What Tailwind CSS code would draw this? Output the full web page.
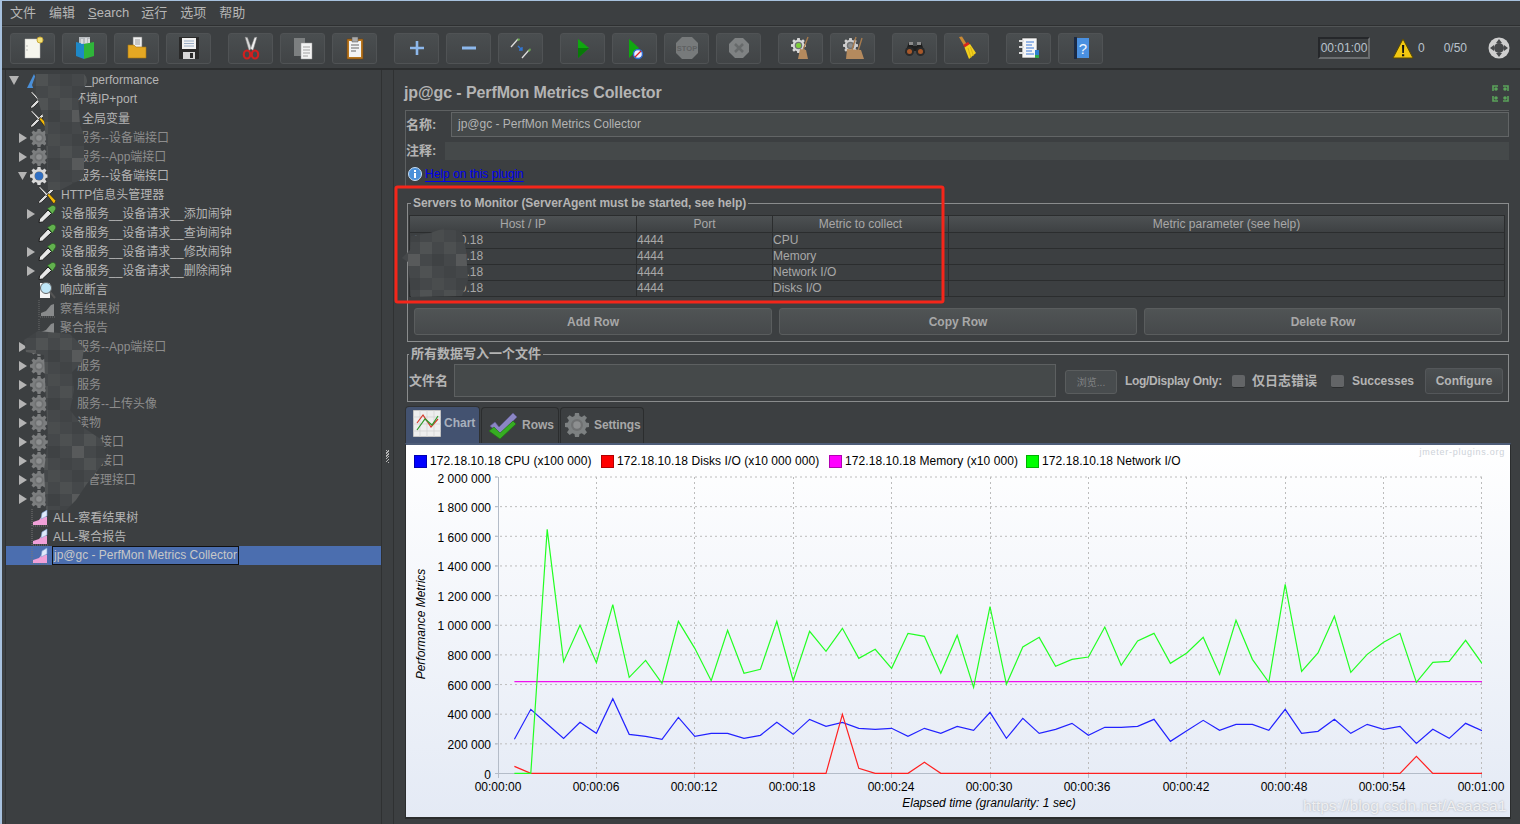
<!DOCTYPE html>
<html lang="zh">
<head>
<meta charset="utf-8">
<title>jp@gc - PerfMon Metrics Collector</title>
<script src="https://cdn.jsdelivr.net/npm/@tailwindcss/browser@4"></script>
</head>
<body class="m-0 overflow-hidden">
<svg width="0" height="0" class="absolute">
  <defs>
    <pattern id="pix" x="0" y="2" width="48" height="48" patternUnits="userSpaceOnUse">
      <rect width="48" height="48" fill="#45484a"/>
      <rect x="12" width="12" height="12" fill="#4d5051"/><rect x="36" width="12" height="12" fill="#505354"/>
      <rect y="12" width="12" height="12" fill="#3f4244"/><rect x="24" y="12" width="12" height="12" fill="#585a5b"/>
      <rect x="12" y="24" width="12" height="12" fill="#414446"/><rect x="36" y="24" width="12" height="12" fill="#4f5253"/>
      <rect y="36" width="12" height="12" fill="#4a4d4e"/><rect x="24" y="36" width="12" height="12" fill="#404345"/>
    </pattern>
    <symbol id="gear" viewBox="0 0 18 18">
      <path d="M7.5 0h3l.4 2.3 1.7.7L14.500 1.600l2 2-1.400 1.900.7 1.700L18 7.500v3l-2.200.4-.7 1.700 1.400 1.900-2 2-1.900-1.400-1.700.7-.4 2.200h-3l-.4-2.200-1.700-.7-1.900 1.400-2-2 1.400-1.900-.7-1.700L0 10.500v-3l2.200-.4.700-1.700L1.500 3.600l2-2 1.900 1.400 1.700-.7z" fill="currentColor"/>
      <circle cx="9" cy="9" r="4.500" fill="#6f7172"/><circle cx="9" cy="9" r="2.800" fill="#8d8f90"/>
    </symbol>
    <symbol id="pipette" viewBox="0 0 18 18">
      <path d="M1 17.500 L1.500 14 L10 5 L13.500 8.500 L4.500 17 Z" fill="#e8e8e8" stroke="#1c1c1c" stroke-width="1"/>
      <path d="M9.500 3.500 L14 .5 Q18 0 17.800 4 L14.500 9 Z" fill="#62b24e" stroke="#2d5c26" stroke-width=".7"/>
    </symbol>
    <symbol id="tools" viewBox="0 0 18 18">
      <path d="M15.500 .5 L17.500 2.500 L4 16 Q1.500 18 .5 17 Q0 16 2 14 Z" fill="#dcdcdc" stroke="#1c1c1c" stroke-width=".8"/>
      <path d="M.5 1 L2 .5 L10 8.500 L8.500 10 Z" fill="#e6e6e6" stroke="#1c1c1c" stroke-width=".7"/>
      <path d="M9 9 L11 7.500 L17.800 14.500 Q18 17 15.500 17.500 Z" fill="#f2b705" stroke="#1c1c1c" stroke-width=".7"/>
    </symbol>
    <symbol id="graph" viewBox="0 0 18 18">
      <path d="M1 0v17h17" fill="none" stroke="#6a6c6d" stroke-dasharray="1 1"/>
      <path d="M3 16 L3 13 L8 11 L13 5 L16 4 L16 16Z" fill="#888a8b"/>
    </symbol>
    <symbol id="pink" viewBox="0 0 18 18">
      <path d="M1 0v17h17" fill="none" stroke="#777" stroke-dasharray="1 1"/>
      <path d="M2 16 L2 13 L8 11 L12 6 L16 8 L16 16Z" fill="#f0a0d8"/>
      <path d="M10 10 L11 4 L16 1 L16 7 Z" fill="#dfeafb" stroke="#7f9fd0" stroke-width=".6"/>
    </symbol>
  </defs>
</svg>

<div class="relative w-[1520px] h-[824px] overflow-hidden bg-[#3c3f41] border-l-2 border-t border-[#a7c1de] text-[12px] text-[#b4b4b4] font-['Liberation_Sans','Noto_Sans_CJK_SC',sans-serif]">

  <!-- menu -->
  <div class="flex items-center gap-[13px] h-[25px] pl-[8px] text-[13px] text-[#b6b6b6] border-b border-[#2e3031]">
    <span>文件</span><span>编辑</span><span class="-mr-[1px]"><span class="underline">S</span>earch</span><span>运行</span><span>选项</span><span>帮助</span>
  </div>

  <!-- toolbar -->
  <div class="flex items-center h-[44px] pl-[8px] pt-[1px] gap-[17px] border-t border-[#515455] border-b-2 border-b-[#2b2d2e]">
    <div class="flex gap-[7px]">
      <div class="flex items-center justify-center w-[45px] h-[31px] rounded-[3px] border border-[#505355] bg-linear-to-b from-[#4a4e50] to-[#414446]">
        <svg width="24" height="24" viewBox="0 0 24 24"><path d="M4 3h15v19H4z" fill="#f6f6ee" stroke="#bbb" stroke-width=".5"/><circle cx="19" cy="4" r="3" fill="#f3e27a" stroke="#c9a93a"/><circle cx="6" cy="10" r=".7" fill="#aaa"/><circle cx="6" cy="14" r=".7" fill="#aaa"/></svg>
      </div>
      <div class="flex items-center justify-center w-[45px] h-[31px] rounded-[3px] border border-[#505355] bg-linear-to-b from-[#4a4e50] to-[#414446]">
        <svg width="24" height="24" viewBox="0 0 24 24"><path d="M6 1h11v8H6z" fill="#b8bcc0"/><path d="M3 6l8 2v15l-8-3z" fill="#1e88c7"/><path d="M11 8l10-2v14l-10 3z" fill="#2fb53a"/><path d="M9 3v5M13 2v5M16 3v4" stroke="#eee" stroke-width="1.200"/></svg>
      </div>
      <div class="flex items-center justify-center w-[45px] h-[31px] rounded-[3px] border border-[#505355] bg-linear-to-b from-[#4a4e50] to-[#414446]">
        <svg width="24" height="24" viewBox="0 0 24 24"><path d="M8 1h9v12H8z" fill="#f0f0f0" stroke="#777" stroke-width=".6"/><path d="M10 4h5M10 6h5M10 8h5" stroke="#888" stroke-width=".8"/><path d="M3 9h6l2 2h10v11H3z" fill="#e5a823" stroke="#a87612" stroke-width=".6"/></svg>
      </div>
      <div class="flex items-center justify-center w-[45px] h-[31px] rounded-[3px] border border-[#505355] bg-linear-to-b from-[#4a4e50] to-[#414446]">
        <svg width="24" height="24" viewBox="0 0 24 24"><path d="M2 1h20v22H2z" fill="#2a2a2a"/><path d="M5 2h14v11H5z" fill="#f2f2f2"/><path d="M7 5h10M7 7.500h10M7 10h10" stroke="#8ea4c0" stroke-width=".9"/><path d="M6 16h12v7H6z" fill="#d8d8d8"/><path d="M13 17h3v5h-3z" fill="#2a2a2a"/></svg>
      </div>
    </div>
    <div class="flex gap-[7px]">
      <div class="flex items-center justify-center w-[45px] h-[31px] rounded-[3px] border border-[#505355] bg-linear-to-b from-[#4a4e50] to-[#414446]">
        <svg width="24" height="24" viewBox="0 0 24 24"><path d="M6 1l2.500 .5 4 11-2.500 2z" fill="#d8d8d8" stroke="#777" stroke-width=".5"/><path d="M18 1l-2.500 .5-4 11 2.500 2z" fill="#f0f0f0" stroke="#777" stroke-width=".5"/><ellipse cx="8" cy="18.500" rx="3.200" ry="4" fill="none" stroke="#d11f1f" stroke-width="2.200"/><ellipse cx="16" cy="18.500" rx="3.200" ry="4" fill="none" stroke="#d11f1f" stroke-width="2.200"/></svg>
      </div>
      <div class="flex items-center justify-center w-[45px] h-[31px] rounded-[3px] border border-[#505355] bg-linear-to-b from-[#4a4e50] to-[#414446]">
        <svg width="24" height="24" viewBox="0 0 24 24"><path d="M3 2h11v18H3z" fill="#7c7f80"/><path d="M10 7h11v16H10z" fill="#f3f3f3" stroke="#999" stroke-width=".5"/><path d="M12 11h7M12 14h7M12 17h7M12 20h5" stroke="#999" stroke-width=".9"/></svg>
      </div>
      <div class="flex items-center justify-center w-[45px] h-[31px] rounded-[3px] border border-[#505355] bg-linear-to-b from-[#4a4e50] to-[#414446]">
        <svg width="24" height="24" viewBox="0 0 24 24"><path d="M4 3h16v20H4z" fill="#b8761e" stroke="#6e4510" stroke-width=".6"/><path d="M6 5h12v16H6z" fill="#f4f4f4"/><path d="M9 1h6v5H9z" fill="#aaa" stroke="#555" stroke-width=".5"/><path d="M8 9h8M8 12h8M8 15h5" stroke="#666" stroke-width="1"/></svg>
      </div>
    </div>
    <div class="flex gap-[7px]">
      <div class="flex items-center justify-center w-[45px] h-[31px] rounded-[3px] border border-[#505355] bg-linear-to-b from-[#4a4e50] to-[#414446]">
        <svg width="24" height="24" viewBox="0 0 24 24"><path d="M12 5v14M5 12h14" stroke="#8db8ec" stroke-width="2.600"/></svg>
      </div>
      <div class="flex items-center justify-center w-[45px] h-[31px] rounded-[3px] border border-[#505355] bg-linear-to-b from-[#4a4e50] to-[#414446]">
        <svg width="24" height="24" viewBox="0 0 24 24"><path d="M5 12h14" stroke="#8db8ec" stroke-width="3"/></svg>
      </div>
      <div class="flex items-center justify-center w-[45px] h-[31px] rounded-[3px] border border-[#505355] bg-linear-to-b from-[#4a4e50] to-[#414446]">
        <svg width="24" height="24" viewBox="0 0 24 24"><path d="M2 11L9 3" stroke="#ddd" stroke-width="1.300"/><path d="M8 4l2-2 1 2-2 1z" fill="#6aa84f"/><path d="M13 22L20 14" stroke="#ddd" stroke-width="1.300"/><path d="M19 15l2-3 1 2-2 2z" fill="#6aa84f"/><path d="M9 10l4 4m0-3v3h-3" fill="none" stroke="#3276d2" stroke-width="1.400"/></svg>
      </div>
    </div>
    <div class="flex gap-[7px]">
      <div class="flex items-center justify-center w-[45px] h-[31px] rounded-[3px] border border-[#505355] bg-linear-to-b from-[#4a4e50] to-[#414446]">
        <svg width="24" height="24" viewBox="0 0 24 24"><path d="M7 3l11 9-11 10z" fill="#0fa80f"/><path d="M7 12h11l-11 10z" fill="#087a08"/></svg>
      </div>
      <div class="flex items-center justify-center w-[45px] h-[31px] rounded-[3px] border border-[#505355] bg-linear-to-b from-[#4a4e50] to-[#414446]">
        <svg width="24" height="24" viewBox="0 0 24 24"><path d="M6 3l10 9-10 10z" fill="#0fa80f"/><circle cx="15" cy="18" r="4.500" fill="#eef" stroke="#2f6bd0" stroke-width="1.400"/><path d="M12 21l6-6" stroke="#d22" stroke-width="1.200"/></svg>
      </div>
      <div class="flex items-center justify-center w-[45px] h-[31px] rounded-[3px] border border-[#505355] bg-linear-to-b from-[#4a4e50] to-[#414446]">
        <svg width="24" height="24" viewBox="0 0 24 24"><path d="M7 1h10l6 6v10l-6 6H7l-6-6V7z" fill="#777a7b"/><text x="12" y="15" text-anchor="middle" font-size="7.500" font-weight="700" fill="#5f6162">STOP</text></svg>
      </div>
      <div class="flex items-center justify-center w-[45px] h-[31px] rounded-[3px] border border-[#505355] bg-linear-to-b from-[#4a4e50] to-[#414446]">
        <svg width="24" height="24" viewBox="0 0 24 24"><path d="M8 2h8l6 6v8l-6 6H8l-6-6V8z" fill="#7f8283"/><path d="M8 8l8 8m0-8l-8 8" stroke="#676a6b" stroke-width="2.500"/></svg>
      </div>
    </div>
    <div class="flex gap-[7px]">
      <div class="flex items-center justify-center w-[45px] h-[31px] rounded-[3px] border border-[#505355] bg-linear-to-b from-[#4a4e50] to-[#414446]">
        <svg width="24" height="24" viewBox="0 0 24 24"><use href="#gear" x="2" y="2" width="15" height="15" class="text-[#d8d8d8]"/><circle cx="9.500" cy="9.500" r="2.500" fill="#7ccf3a"/><path d="M19 1l-5 13" stroke="#a57a4e" stroke-width="1.400"/><path d="M11 13l6 1 2 9H9z" fill="#b48a5e"/></svg>
      </div>
      <div class="flex items-center justify-center w-[45px] h-[31px] rounded-[3px] border border-[#505355] bg-linear-to-b from-[#4a4e50] to-[#414446]">
        <svg width="24" height="24" viewBox="0 0 24 24"><use href="#gear" x="2" y="2" width="15" height="15" class="text-[#cfcfcf]"/><path d="M15 1l-4 13M21 2l-4 13" stroke="#a57a4e" stroke-width="1.400"/><path d="M6 13l14 1 3 9H5z" fill="#b48a5e"/></svg>
      </div>
    </div>
    <div class="flex gap-[7px]">
      <div class="flex items-center justify-center w-[45px] h-[31px] rounded-[3px] border border-[#505355] bg-linear-to-b from-[#4a4e50] to-[#414446]">
        <svg width="24" height="24" viewBox="0 0 24 24"><path d="M6 6h4v4h4V6h4l4 11H14v-2h-4v2H2z" fill="#1f1f1f"/><circle cx="6.500" cy="15.500" r="4.500" fill="#2a2a2a"/><circle cx="17.500" cy="15.500" r="4.500" fill="#2a2a2a"/><circle cx="6.500" cy="15.500" r="2.500" fill="#a8582a"/><circle cx="17.500" cy="15.500" r="2.500" fill="#a8582a"/><path d="M6 6h4v3H6zM14 6h4v3h-4z" fill="#8b8b8b"/></svg>
      </div>
      <div class="flex items-center justify-center w-[45px] h-[31px] rounded-[3px] border border-[#505355] bg-linear-to-b from-[#4a4e50] to-[#414446]">
        <svg width="24" height="24" viewBox="0 0 24 24"><path d="M4 1l3-.5 5 8-2.500 2z" fill="#c98a35"/><path d="M8 9l5-3 2 2.500-5 3z" fill="#d8261c"/><path d="M9.500 11.500l5.500-3.500 6 9-7 6z" fill="#f2cf1d"/><path d="M13 12l3 10M15.500 11l3 9" stroke="#c9a50c" stroke-width=".7"/></svg>
      </div>
    </div>
    <div class="flex gap-[7px]">
      <div class="flex items-center justify-center w-[45px] h-[31px] rounded-[3px] border border-[#505355] bg-linear-to-b from-[#4a4e50] to-[#414446]">
        <svg width="24" height="24" viewBox="0 0 24 24"><path d="M5 2h15v20H5z" fill="#f6f6f6" stroke="#333" stroke-width=".6"/><path d="M9 6h8M9 9h6M9 12h8M9 15h6M9 18h8" stroke="#3a78d8" stroke-width="1.100"/><path d="M2 5h5M2 11h5M2 17h5" stroke="#ddd" stroke-width="2"/><path d="M18 14h4v5h-4z" fill="#2f80d0"/><path d="M18 19h4v3h-4z" fill="#2fa84a"/></svg>
      </div>
      <div class="flex items-center justify-center w-[45px] h-[31px] rounded-[3px] border border-[#505355] bg-linear-to-b from-[#4a4e50] to-[#414446]">
        <svg width="24" height="24" viewBox="0 0 24 24"><path d="M5 1h3v22H5z" fill="#1b2a44"/><path d="M8 2h12v20H8z" fill="#4a90e0"/><text x="14" y="18" text-anchor="middle" font-size="15" fill="#f0f6ff">?</text></svg>
      </div>
    </div>
    <div class="flex items-center ml-[198px]">
      <div class="flex items-center justify-center w-[52px] h-[22px] border-2 border-t-[#25272a] border-l-[#25272a] border-r-[#6a6d6f] border-b-[#6a6d6f] text-[#b9c3cd]">00:01:00</div>
      <svg class="ml-[22px]" width="22" height="21" viewBox="0 0 22 21"><path d="M11 1l10 19H1z" fill="#f2c811" stroke="#5b4a00"/><path d="M10 7h2.200l-.3 8h-1.600zM10 16.200h2.200v2H10z" fill="#111"/></svg>
      <span class="ml-[4px] text-[#b9c3cd]">0</span>
      <span class="ml-[19px] text-[#b9c3cd]">0/50</span>
      <svg class="ml-[21px]" width="22" height="22" viewBox="0 0 22 22"><circle cx="11" cy="11" r="10.500" fill="#cfcfcf"/><circle cx="11" cy="11" r="5" fill="#47494b"/><path d="M11 2l3 4H8zM11 20l3-4H8zM2 11l4-3v6zM20 11l-4-3v6z" fill="#47494b"/></svg>
    </div>
  </div>

  <!-- main -->
  <div class="flex h-[754px]">
    <!-- tree -->
    <div class="w-[377px] ml-[3px] border-x border-[#2f3132] pt-[1px]">
      <div class="flex items-center h-[19px] pl-[3px]"><svg class="w-[10px] h-[9px] text-[#b4b4b4]" viewBox="0 0 10 9"><path d="M0 0h10L5 9z" fill="currentColor"/></svg><svg class="ml-[6px]" width="18" height="18" viewBox="0 0 18 18"><path d="M2 16L9 2l6 14z" fill="#4a8fd8"/></svg><span class="ml-[42px] mb-[2px]">_performance</span></div>
      <div class="flex items-center h-[19px] pl-[24px]"><svg width="18" height="18"><use href="#tools"/></svg><span class="ml-[26px] mb-[2px]">环境IP+port</span></div>
      <div class="flex items-center h-[19px] pl-[24px]"><svg width="18" height="18"><use href="#tools"/></svg><span class="ml-[34px]">全局变量</span></div>
      <div class="flex items-center h-[19px] pl-[13px] text-[#8d8d8d]"><svg class="w-[8px] h-[10px] text-[#b4b4b4]" viewBox="0 0 8 10"><path d="M0 0l8 5-8 5z" fill="currentColor"/></svg><svg class="ml-[3px] text-[#7c7e7f]" width="18" height="18"><use href="#gear"/></svg><span class="ml-[29px]">服务--设备端接口</span></div>
      <div class="flex items-center h-[19px] pl-[13px] text-[#8d8d8d]"><svg class="w-[8px] h-[10px] text-[#b4b4b4]" viewBox="0 0 8 10"><path d="M0 0l8 5-8 5z" fill="currentColor"/></svg><svg class="ml-[3px] text-[#7c7e7f]" width="18" height="18"><use href="#gear"/></svg><span class="ml-[29px]">服务--App端接口</span></div>
      <div class="flex items-center h-[19px] pl-[12px]"><svg class="w-[9px] h-[8px] text-[#b4b4b4]" viewBox="0 0 9 8"><path d="M0 0h9L4.500 8z" fill="currentColor"/></svg><svg class="ml-[3px]" width="18" height="18" viewBox="0 0 18 18"><use href="#gear" width="18" height="18" class="text-[#d9d9d9]"/><circle cx="9" cy="9" r="4" fill="#2f6fc4"/></svg><span class="ml-[29px]">服务--设备端接口</span></div>
      <div class="flex items-center h-[19px] pl-[32px]"><svg width="18" height="18"><use href="#tools"/></svg><span class="ml-[5px]">HTTP信息头管理器</span></div>
      <div class="flex items-center h-[19px] pl-[21px]"><svg class="w-[8px] h-[10px] text-[#b4b4b4]" viewBox="0 0 8 10"><path d="M0 0l8 5-8 5z" fill="currentColor"/></svg><svg class="ml-[3px]" width="18" height="18"><use href="#pipette"/></svg><span class="ml-[5px]">设备服务__设备请求__添加闹钟</span></div>
      <div class="flex items-center h-[19px] pl-[32px]"><svg width="18" height="18"><use href="#pipette"/></svg><span class="ml-[5px]">设备服务__设备请求__查询闹钟</span></div>
      <div class="flex items-center h-[19px] pl-[21px]"><svg class="w-[8px] h-[10px] text-[#b4b4b4]" viewBox="0 0 8 10"><path d="M0 0l8 5-8 5z" fill="currentColor"/></svg><svg class="ml-[3px]" width="18" height="18"><use href="#pipette"/></svg><span class="ml-[5px]">设备服务__设备请求__修改闹钟</span></div>
      <div class="flex items-center h-[19px] pl-[21px]"><svg class="w-[8px] h-[10px] text-[#b4b4b4]" viewBox="0 0 8 10"><path d="M0 0l8 5-8 5z" fill="currentColor"/></svg><svg class="ml-[3px]" width="18" height="18"><use href="#pipette"/></svg><span class="ml-[5px]">设备服务__设备请求__删除闹钟</span></div>
      <div class="flex items-center h-[19px] pl-[32px]"><svg width="18" height="18" viewBox="0 0 18 18"><path d="M2 2h10v15H2z" fill="#f3f3f3"/><circle cx="8" cy="7" r="5.500" fill="#bfe6f7" stroke="#666"/><path d="M12 11l5 6" stroke="#555" stroke-width="2"/></svg><span class="ml-[4px]">响应断言</span></div>
      <div class="flex items-center h-[19px] pl-[32px] text-[#8d8d8d]"><svg width="18" height="18"><use href="#graph"/></svg><span class="ml-[4px]">察看结果树</span></div>
      <div class="flex items-center h-[19px] pl-[32px] text-[#8d8d8d]"><svg width="18" height="18"><use href="#graph"/></svg><span class="ml-[4px]">聚合报告</span></div>
      <div class="flex items-center h-[19px] pl-[13px] text-[#8d8d8d]"><svg class="w-[8px] h-[10px] text-[#b4b4b4]" viewBox="0 0 8 10"><path d="M0 0l8 5-8 5z" fill="currentColor"/></svg><svg class="ml-[3px] text-[#7c7e7f]" width="18" height="18"><use href="#gear"/></svg><span class="ml-[29px]">服务--App端接口</span></div>
      <div class="flex items-center h-[19px] pl-[13px] text-[#8d8d8d]"><svg class="w-[8px] h-[10px] text-[#b4b4b4]" viewBox="0 0 8 10"><path d="M0 0l8 5-8 5z" fill="currentColor"/></svg><svg class="ml-[3px] text-[#7c7e7f]" width="18" height="18"><use href="#gear"/></svg><span class="ml-[29px]">服务</span></div>
      <div class="flex items-center h-[19px] pl-[13px] text-[#8d8d8d]"><svg class="w-[8px] h-[10px] text-[#b4b4b4]" viewBox="0 0 8 10"><path d="M0 0l8 5-8 5z" fill="currentColor"/></svg><svg class="ml-[3px] text-[#7c7e7f]" width="18" height="18"><use href="#gear"/></svg><span class="ml-[29px]">服务</span></div>
      <div class="flex items-center h-[19px] pl-[13px] text-[#8d8d8d]"><svg class="w-[8px] h-[10px] text-[#b4b4b4]" viewBox="0 0 8 10"><path d="M0 0l8 5-8 5z" fill="currentColor"/></svg><svg class="ml-[3px] text-[#7c7e7f]" width="18" height="18"><use href="#gear"/></svg><span class="ml-[29px]">服务--上传头像</span></div>
      <div class="flex items-center h-[19px] pl-[13px] text-[#8d8d8d]"><svg class="w-[8px] h-[10px] text-[#b4b4b4]" viewBox="0 0 8 10"><path d="M0 0l8 5-8 5z" fill="currentColor"/></svg><svg class="ml-[3px] text-[#7c7e7f]" width="18" height="18"><use href="#gear"/></svg><span class="ml-[29px]">读物</span></div>
      <div class="flex items-center h-[19px] pl-[13px] text-[#8d8d8d]"><svg class="w-[8px] h-[10px] text-[#b4b4b4]" viewBox="0 0 8 10"><path d="M0 0l8 5-8 5z" fill="currentColor"/></svg><svg class="ml-[3px] text-[#7c7e7f]" width="18" height="18"><use href="#gear"/></svg><span class="ml-[52px]">接口</span></div>
      <div class="flex items-center h-[19px] pl-[13px] text-[#8d8d8d]"><svg class="w-[8px] h-[10px] text-[#b4b4b4]" viewBox="0 0 8 10"><path d="M0 0l8 5-8 5z" fill="currentColor"/></svg><svg class="ml-[3px] text-[#7c7e7f]" width="18" height="18"><use href="#gear"/></svg><span class="ml-[52px]">接口</span></div>
      <div class="flex items-center h-[19px] pl-[13px] text-[#8d8d8d]"><svg class="w-[8px] h-[10px] text-[#b4b4b4]" viewBox="0 0 8 10"><path d="M0 0l8 5-8 5z" fill="currentColor"/></svg><svg class="ml-[3px] text-[#7c7e7f]" width="18" height="18"><use href="#gear"/></svg><span class="ml-[40px]">管理接口</span></div>
      <div class="flex items-center h-[19px] pl-[13px]"><svg class="w-[8px] h-[10px] text-[#b4b4b4]" viewBox="0 0 8 10"><path d="M0 0l8 5-8 5z" fill="currentColor"/></svg><svg class="ml-[3px] text-[#7c7e7f]" width="18" height="18"><use href="#gear"/></svg></div>
      <div class="flex items-center h-[19px] pl-[25px]"><svg width="18" height="18"><use href="#pink"/></svg><span class="ml-[4px]">ALL-察看结果树</span></div>
      <div class="flex items-center h-[19px] pl-[25px]"><svg width="18" height="18"><use href="#pink"/></svg><span class="ml-[4px]">ALL-聚合报告</span></div>
      <div class="flex items-center h-[19px] pl-[25px] bg-[#4b6eaf]"><svg width="18" height="18"><use href="#pink"/></svg><span class="ml-[3px] h-[19px] leading-[17px] border border-[#111] pl-[1px] pr-[1px] text-[#c8c8c8]">jp@gc - PerfMon Metrics Collector</span></div>
    </div>

    <!-- splitter -->
    <div class="flex items-center justify-center w-[11px]"><div class="w-[3px] h-[13px] mt-[18px] bg-[repeating-linear-gradient(135deg,#b5b5b5_0,#b5b5b5_1px,#3c3f41_1px,#3c3f41_2px)]"></div></div>

    <!-- right -->
    <div class="w-[1127px] border-l border-[#2f3132] pl-[10px] pr-[11px]">
      <div class="flex items-center justify-between h-[40px] pt-[5px]">
        <span class="text-[16px] tracking-[-0.1px] font-bold text-[#b4b4b4]">jp@gc - PerfMon Metrics Collector</span>
        <svg class="mr-[0px] mt-[1px]" width="17" height="17" viewBox="0 0 17 17"><path d="M1 6V1h5M11 1h5v5M16 11v5h-5M6 16H1v-5" fill="none" stroke="#5aa35a" stroke-width="1.600"/><circle cx="4" cy="4" r="1.800" fill="#5aa35a"/><circle cx="13" cy="4" r="1.800" fill="#5aa35a"/><circle cx="4" cy="13" r="1.800" fill="#5aa35a"/><circle cx="13" cy="13" r="1.800" fill="#5aa35a"/></svg>
      </div>

      <div class="border-l border-t border-[#5d6061] h-[76px] ml-[1px]">
        <div class="flex items-center h-[25px] mt-[1px]">
          <span class="w-[45px] text-[13px] font-bold">名称:</span>
          <div class="flex items-center flex-1 h-[25px] px-[6px] pb-[1px] border border-[#626566] bg-[#45494a]">jp@gc - PerfMon Metrics Collector</div>
        </div>
        <div class="flex items-center h-[18px] mt-[5px]">
          <span class="w-[39px] text-[13px] font-bold">注释:</span>
          <div class="flex-1 h-[18px] bg-[#45494a]"></div>
        </div>
        <div class="flex items-center h-[18px] mt-[5px] pl-[2px]">
          <svg width="14" height="14" viewBox="0 0 14 14"><circle cx="7" cy="7" r="6.500" fill="#4a90d9" stroke="#c5dcf3"/><rect x="6" y="6" width="2" height="5" fill="#fff"/><rect x="6" y="3" width="2" height="2" fill="#fff"/></svg>
          <span class="ml-[3px] text-[#0000ee] underline underline-offset-[3px]">Help on this plugin</span>
        </div>
      </div>

      <!-- servers -->
      <div class="relative mt-[17px] ml-[3px] h-[139px] border border-[#8a8c8d] pt-[11px] pl-[1px]">
        <span class="absolute -top-[10px] left-[3px] bg-[#3c3f41] px-[2px] tracking-[-0.05px] font-bold text-[#b4b4b4]">Servers to Monitor (ServerAgent must be started, see help)</span>
        <table class="w-[1096px] table-fixed border-collapse border border-[#2b2d2e] text-[#a8a8a8] leading-[12px]">
          <colgroup><col class="w-[227px]"><col class="w-[136px]"><col class="w-[176px]"><col></colgroup>
          <thead>
            <tr class="h-[17px] bg-linear-to-b from-[#4d5153] to-[#3d4042] font-normal">
              <th class="p-0 font-normal border-r border-[#2b2d2e] text-center">Host / IP</th>
              <th class="p-0 font-normal border-r border-[#2b2d2e] text-center">Port</th>
              <th class="p-0 font-normal border-r border-[#2b2d2e] text-center">Metric to collect</th>
              <th class="p-0 font-normal text-center">Metric parameter (see help)</th>
            </tr>
          </thead>
          <tbody>
            <tr class="h-[16px] border-t border-[#2b2d2e]"><td class="p-0 pb-[2px] pl-[3px] border-r border-[#2b2d2e]">172.18.10.18</td><td class="p-0 pb-[2px] border-r border-[#2b2d2e]">4444</td><td class="p-0 pb-[2px] border-r border-[#2b2d2e]">CPU</td><td class="p-0"></td></tr>
            <tr class="h-[16px] border-t border-[#2b2d2e]"><td class="p-0 pb-[2px] pl-[3px] border-r border-[#2b2d2e]">172.18.10.18</td><td class="p-0 pb-[2px] border-r border-[#2b2d2e]">4444</td><td class="p-0 pb-[2px] border-r border-[#2b2d2e]">Memory</td><td class="p-0"></td></tr>
            <tr class="h-[16px] border-t border-[#2b2d2e]"><td class="p-0 pb-[2px] pl-[3px] border-r border-[#2b2d2e]">172.18.10.18</td><td class="p-0 pb-[2px] border-r border-[#2b2d2e]">4444</td><td class="p-0 pb-[2px] border-r border-[#2b2d2e]">Network I/O</td><td class="p-0"></td></tr>
            <tr class="h-[16px] border-y border-[#2b2d2e]"><td class="p-0 pb-[2px] pl-[3px] border-r border-[#2b2d2e]">172.18.10.18</td><td class="p-0 pb-[2px] border-r border-[#2b2d2e]">4444</td><td class="p-0 pb-[2px] border-r border-[#2b2d2e]">Disks I/O</td><td class="p-0"></td></tr>
          </tbody>
        </table>
        <div class="flex gap-[7px] mt-[11px] ml-[5px]">
          <div class="flex items-center justify-center w-[358px] h-[27px] rounded-[3px] border border-[#5a5d5e] bg-linear-to-b from-[#505455] to-[#46494b] font-bold text-[#a8a8a8]">Add Row</div>
          <div class="flex items-center justify-center w-[358px] h-[27px] rounded-[3px] border border-[#5a5d5e] bg-linear-to-b from-[#505455] to-[#46494b] font-bold text-[#a8a8a8]">Copy Row</div>
          <div class="flex items-center justify-center w-[358px] h-[27px] rounded-[3px] border border-[#5a5d5e] bg-linear-to-b from-[#505455] to-[#46494b] font-bold text-[#a8a8a8]">Delete Row</div>
        </div>
      </div>

      <!-- file -->
      <div class="relative flex items-center mt-[12px] ml-[3px] h-[48px] border border-[#8a8c8d] pt-[6px]">
        <span class="absolute -top-[11px] left-[1px] bg-[#3c3f41] px-[2px] text-[13px] font-bold">所有数据写入一个文件</span>
        <span class="ml-[1px] w-[45px] text-[13px] font-bold">文件名</span>
        <div class="w-[602px] h-[33px] border border-[#5d6061] bg-[#45494a] -mt-[2px]"></div>
        <div class="flex items-center justify-center ml-[9px] mt-[2px] w-[52px] h-[24px] rounded-[3px] border border-[#5a5d5e] bg-[#484c4e] text-[10px] text-[#808284]">浏览...</div>
        <span class="ml-[8px] tracking-[-0.3px] font-bold">Log/Display Only:</span>
        <span class="ml-[10px] mt-[1px] w-[13px] h-[13px] rounded-[2px] border-b border-[#2b2d2e] bg-[#636567]"></span>
        <span class="ml-[7px] text-[13px] font-bold">仅日志错误</span>
        <span class="ml-[14px] mt-[1px] w-[13px] h-[13px] rounded-[2px] border-b border-[#2b2d2e] bg-[#636567]"></span>
        <span class="ml-[8px] font-bold">Successes</span>
        <div class="flex items-center justify-center ml-[11px] w-[78px] h-[26px] rounded-[3px] border border-[#54575a] bg-linear-to-b from-[#4b4f51] to-[#414446] font-bold">Configure</div>
      </div>

      <!-- tabs -->
      <div class="flex items-end h-[38px] mt-[3px] ml-[1px] gap-[1px]">
        <div class="flex items-center w-[75px] h-[37px] pl-[7px] pb-[4px] rounded-t-[4px] border border-[#2f3132] border-b-0 bg-[#435270]">
          <svg width="28" height="27" viewBox="0 0 28 27"><rect width="28" height="27" fill="#eeeeee" stroke="#999"/><path d="M7 0v27M14 0v27M21 0v27M0 7h28M0 14h28M0 21h28" stroke="#d0d0d0" stroke-width=".7"/><path d="M4 13l6-8 8 12 7-8" fill="none" stroke="#d53a2a" stroke-width="1.200"/><path d="M4 20l8-11 7 6 6-9" fill="none" stroke="#2e9a2a" stroke-width="1.200"/></svg>
          <span class="ml-[3px] font-bold text-[#a8b0bd]">Chart</span>
        </div>
        <div class="flex items-center w-[78px] h-[36px] pl-[6px] pb-[1px] rounded-t-[4px] border border-[#2b2d2e] border-b-0">
          <svg width="30" height="30" viewBox="0 0 30 30"><path d="M2 16l5-4 4 5 14-14 4 4L12 24z" fill="#8b86c4" stroke="#5a568f" stroke-width=".6"/><path d="M1 21l5-4 6 6L25 11l3 3-16 15z" fill="#36ad22" stroke="#1e6e10" stroke-width=".6"/></svg>
          <span class="ml-[4px] font-bold text-[#a8a8a8]">Rows</span>
        </div>
        <div class="flex items-center w-[84px] h-[36px] pl-[4px] pb-[1px] rounded-t-[4px] border border-[#2b2d2e] border-b-0">
          <svg class="text-[#7d8182]" width="24" height="24"><use href="#gear" width="24" height="24"/></svg>
          <span class="ml-[5px] tracking-[-0.1px] font-bold text-[#a8a8a8]">Settings</span>
        </div>
      </div>

      <!-- chart -->
      <div class="relative ml-[1px] w-[1106px] h-[376px] border-t-2 border-[#4e5d78] border-x border-b-2 border-x-[#2b2d2e] border-b-[#2b2d2e] bg-linear-to-b from-[#ffffff] to-[#e4eaf5] overflow-hidden text-black">
        <div class="flex items-center h-[24px] mt-[4px] pl-[8px] text-[12px] tracking-[0.08px]">
          <div class="flex items-center w-[187px]"><span class="w-[13px] h-[13px] mr-[3px] bg-[#0000ff] border border-black/30"></span>172.18.10.18 CPU (x100 000)</div>
          <div class="flex items-center w-[228px]"><span class="w-[13px] h-[13px] mr-[3px] bg-[#ff0000] border border-black/30"></span>172.18.10.18 Disks I/O (x10 000 000)</div>
          <div class="flex items-center w-[197px]"><span class="w-[13px] h-[13px] mr-[3px] bg-[#ff00ff] border border-black/30"></span>172.18.10.18 Memory (x10 000)</div>
          <div class="flex items-center"><span class="w-[13px] h-[13px] mr-[3px] bg-[#00ff00] border border-black/30"></span>172.18.10.18 Network I/O</div>
        </div>
        <span class="absolute top-[1px] right-[5px] text-[9px] tracking-[0.75px] text-[#cdd2d9]">jmeter-plugins.org</span>
        <svg class="absolute top-0 left-0" width="1104" height="374" viewBox="406 445 1104 374" font-family="Liberation Sans" font-size="12" fill="#000">
          <path d="M495 477H1482M495 506.650H1482M495 536.300H1482M495 565.950H1482M495 595.600H1482M495 625.250H1482M495 654.900H1482M495 684.550H1482M495 714.200H1482M495 743.850H1482" stroke="#bcbcbc" stroke-dasharray="2 3" fill="none"/>
          <path d="M596.500 477V773M694.500 477V773M793.500 477V773M891.500 477V773M990.500 477V773M1088.500 477V773M1186.500 477V773M1285.500 477V773M1383.500 477V773M1481.500 477V773" stroke="#bcbcbc" stroke-dasharray="2 3" fill="none"/>
          <path d="M498.500 477V778M495 773.500H1482M596.500 773V778M694.500 773V778M793.500 773V778M891.500 773V778M990.500 773V778M1088.500 773V778M1186.500 773V778M1285.500 773V778M1383.500 773V778M1481.500 773V778M495 477h3M495 506.650h3M495 536.300h3M495 565.950h3M495 595.600h3M495 625.250h3M495 654.900h3M495 684.550h3M495 714.200h3M495 743.850h3" stroke="#b4bcc8" fill="none"/>
          <g text-anchor="end">
            <text x="491" y="483">2 000 000</text><text x="491" y="512">1 800 000</text><text x="491" y="542">1 600 000</text><text x="491" y="571">1 400 000</text><text x="491" y="601">1 200 000</text><text x="491" y="630">1 000 000</text><text x="491" y="660">800 000</text><text x="491" y="690">600 000</text><text x="491" y="719">400 000</text><text x="491" y="749">200 000</text><text x="491" y="779">0</text>
          </g>
          <g text-anchor="middle">
            <text x="498" y="791">00:00:00</text><text x="596" y="791">00:00:06</text><text x="694" y="791">00:00:12</text><text x="792" y="791">00:00:18</text><text x="891" y="791">00:00:24</text><text x="989" y="791">00:00:30</text><text x="1087" y="791">00:00:36</text><text x="1186" y="791">00:00:42</text><text x="1284" y="791">00:00:48</text><text x="1382" y="791">00:00:54</text><text x="1481" y="791">00:01:00</text>
          </g>
          <text transform="translate(425 624) rotate(-90)" text-anchor="middle" font-style="italic">Performance Metrics</text>
          <text x="989" y="807" text-anchor="middle" font-style="italic" letter-spacing=".05">Elapsed time (granularity: 1 sec)</text>
          <svg x="498" y="477" width="984" height="297" viewBox="0 -69 60 891" preserveAspectRatio="none">
            <polyline vector-effect="non-scaling-stroke" fill="none" stroke="#2222ff" stroke-width="1.200" points="1,718 2,628 3,672 4,715 5,667 6,700 7,596 8,703 9,709 10,718 11,652 12,709 13,700 14,700 15,715 16,706 17,667 18,703 19,658 20,679 21,667 22,685 23,688 24,685 25,709 26,685 27,700 28,679 29,691 30,637 31,715 32,655 33,700 34,688 35,670 36,706 37,682 38,682 39,679 40,658 41,724 42,692 43,661 44,691 45,673 46,673 47,691 48,628 49,700 50,694 51,658 52,700 53,673 54,688 55,679 56,730 57,688 58,715 59,670 60,692"/>
            <polyline vector-effect="non-scaling-stroke" fill="none" stroke="#ff2020" stroke-width="1.200" points="1,799 2,820 20,820 21,643 22,805 23,820 25,820 26,787 27,820 55,820 56,769 57,820 60,820"/>
            <polyline vector-effect="non-scaling-stroke" fill="none" stroke="#ee11ee" stroke-width="1.200" points="1,545 60,545"/>
            <polyline vector-effect="non-scaling-stroke" fill="none" stroke="#22ff22" stroke-width="1.200" points="1,820 2,820 3,88 4,485 5,376 6,488 7,314 8,532 9,481 10,550 11,364 12,445 13,542 14,391 15,520 16,508 17,364 18,542 19,394 20,454 21,385 22,475 23,448 24,505 25,400 26,409 27,520 28,406 29,562 30,320 31,553 32,441 33,412 34,499 35,478 36,471 37,381 38,496 39,423 40,400 41,490 42,459 43,412 44,523 45,361 46,478 47,547 48,253 49,514 50,459 51,349 52,517 53,463 54,427 55,400 56,547 57,487 58,484 59,421 60,490"/>
          </svg>
        </svg>
        <span class="absolute bottom-[0px] left-[897px] text-[15.500px] text-[#ffffff]/75 [text-shadow:0_0_2px_rgba(120,120,120,0.6)]">https://blog.csdn.net/Asaasa1</span>
      </div>
    </div>
  </div>

  <!-- mosaic redactions and the reviewer's red frame, both lying over the content -->
  <svg class="absolute -left-[2px] -top-[1px] pointer-events-none" width="1520" height="824" viewBox="0 0 1520 824">
    <path d="M36 74H84Q90 80 84 88L78 98 80 125 84 135 84 178 60 190 48 190 46 140 44 120 38 100 32 85Z" fill="url(#pix)"/>
    <path d="M38 331L70 334 84 348 82 362 72 372 74 390 70 410 84 428 102 440 107 458 94 475 86 485 76 500 66 510 46 510 44 470 48 440 46 400 44 355 26 352 24 340Z" fill="url(#pix)"/>
    <path d="M411 236L430 233 445 228 462 232 466 250 468 280 462 296 411 297 408 262 402 258 410 250Z" fill="url(#pix)"/>
    <rect x="396" y="187" width="547" height="115" rx="1.500" fill="none" stroke="#f5261a" stroke-width="3"/>
  </svg>
</div>
</body>
</html>
